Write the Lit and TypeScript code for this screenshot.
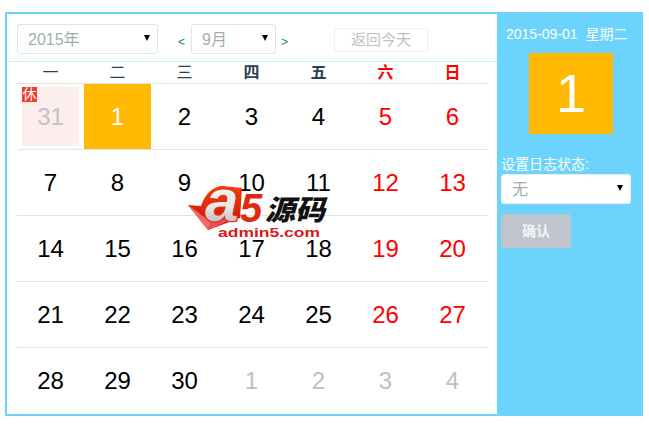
import { LitElement, html, css } from "lit";
import { customElement } from "lit/decorators.js";

interface Day { n: number; tone?: string; }
const weeks: Day[][] = [];
const seq: Day[] = [{ n: 31, tone: "muted" }];
for (let i = 1; i <= 30; i++) seq.push({ n: i });
for (let i = 1; i <= 4; i++) seq.push({ n: i, tone: "muted" });
for (let i = 0; i < 35; i += 7) {
  weeks.push(seq.slice(i, i + 7).map((d, j) => (j >= 5 && !d.tone ? { ...d, tone: "red" } : d)));
}

@customElement("app-root")
export class AppRoot extends LitElement {
  static styles = css`
    :host { display: block; width: 649px; height: 426px; overflow: hidden; background: #fff; font-family: "Liberation Sans", "Noto Sans CJK SC", sans-serif; position: relative; }
    .page { padding: 12px 6px 0 5px; }
    .box { display: flex; height: 404px; width: 638px; box-sizing: border-box; border: solid #6cd3fd; border-width: 2px 0 2px 2px; }
    .main { width: 490px; flex: none; display: flex; flex-direction: column; }
    .toolbar { height: 49px; box-sizing: border-box; border-bottom: 1px solid #c8f4f8; padding: 10px 0 0 10px; display: flex; align-items: flex-start; }
    .sel { position: relative; box-sizing: border-box; height: 30px; border: 1px solid #dde4ec; border-radius: 3px; background: #fff; color: #a3adad; font-size: 16px; line-height: 30px; padding-left: 10px; }
    .sel::after { content: ""; position: absolute; right: 7px; top: 10px; border: solid transparent; border-width: 6px 3.5px 0; border-top-color: #000; }
    .year { width: 141px; }
    .month { width: 85px; }
    .arrow { font-size: 12px; color: #0f8a78; line-height: 16px; margin-top: 10px; width: 8px; }
    .prev { margin-left: 20px; margin-right: 5px; }
    .next { margin-left: 5px; }
    .today { margin: 4px 0 0 45px; width: 94px; height: 24px; box-sizing: border-box; border: 1px solid #f0f0f0; color: #c0c0c0; font-size: 15px; line-height: 22px; text-align: center; }
    .grid { margin-left: 10px; width: 470px; }
    .head { display: grid; grid-template-columns: repeat(7, 67px); height: 22px; border-bottom: 1px solid #e3e3e3; box-sizing: border-box; font-size: 16px; line-height: 21px; text-align: center; color: #2c3e50; }
    .head .we { color: #f00; font-weight: 700; }
    .head .b { font-weight: 700; }
    .row { display: grid; grid-template-columns: repeat(7, 67px); height: 66px; box-sizing: border-box; border-bottom: 1px solid #e3e3e3; }
    .row:last-child { border-bottom: 0; }
    .cell { display: flex; align-items: center; justify-content: center; font-size: 24px; color: #000; position: relative; }
    .cell.red { color: #f00; }
    .cell.muted { color: #c0c0c0; }
    .cell.sel-day { background: #ffb900; color: #fff; }
    .cell.rest { background: #fdeeee; margin: 3px 5px 3px 5px; color: #c4c0c6; }
    .badge { position: absolute; left: 0; top: 0; width: 15px; height: 15px; background: #f43a2d; color: #fff; font-size: 14px; line-height: 15px; text-align: center; }
    .side { flex: 1; min-width: 0; background: #6cd3fd; margin: -2px 0; padding: 0 0 0 4px; color: #fff; }
    .date { margin: 13px 0 0 5px; height: 18px; line-height: 18px; font-size: 14px; white-space: pre; }
    .big { width: 84px; height: 81px; margin: 10px 0 0 28px; background: #ffb900; font-size: 54px; line-height: 81px; text-align: center; }
    .label { margin-top: 21px; font-size: 14px; line-height: 18px; }
    .status { width: 130px; margin-top: 1px; border-color: #e5eef3; }
    .ok { margin-top: 10px; width: 70px; height: 34px; background: #c0c4cc; border-radius: 3px; font-size: 14px; font-weight: 700; line-height: 34px; text-align: center; color: #f4f4f4; }
    .logo { position: absolute; left: 181px; top: 170px; width: 150px; height: 70px; }
  `;

  render() {
    const heads = ["一", "二", "三", "四", "五", "六", "日"];
    return html`
      <div class="page">
        <div class="box">
          <div class="main">
            <div class="toolbar">
              <div class="sel year">2015年</div>
              <div class="arrow prev">&lt;</div>
              <div class="sel month">9月</div>
              <div class="arrow next">&gt;</div>
              <div class="today">返回今天</div>
            </div>
            <div class="grid">
              <div class="head">
                ${heads.map((h, i) => html`<div class="${i >= 5 ? "we" : i >= 3 ? "b" : ""}">${h}</div>`)}
              </div>
              ${weeks.map((w, r) => html`
                <div class="row">
                  ${w.map((d, c) => {
                    if (r === 0 && c === 0) return html`<div class="cell rest"><span class="badge">休</span>${d.n}</div>`;
                    if (r === 0 && c === 1) return html`<div class="cell sel-day">${d.n}</div>`;
                    return html`<div class="cell ${d.tone ?? ""}">${d.n}</div>`;
                  })}
                </div>`)}
            </div>
          </div>
          <div class="side">
            <div class="date">2015-09-01  星期二</div>
            <div class="big">1</div>
            <div class="label">设置日志状态:</div>
            <div class="sel status">无</div>
            <div class="ok">确认</div>
          </div>
        </div>
      </div>
      <svg class="logo" viewBox="0 0 150 70">
        <defs>
          <linearGradient id="r" x1="0" y1="0" x2="0" y2="1"><stop offset="0" stop-color="#f4400c"/><stop offset="1" stop-color="#c40e10"/></linearGradient>
          <linearGradient id="g" x1="0" y1="0" x2="0" y2="1"><stop offset="0" stop-color="#fff"/><stop offset="0.6" stop-color="#e8e8e8"/><stop offset="1" stop-color="#a0a0a0"/></linearGradient>
        </defs>
        <path d="M7 35 L20 36 C24 24 32 16 42 16 L61 18 L59 48 L27 60 Z" fill="url(#r)"/>
        <path d="M7 35 L27 60 L30 52 Z" fill="#ee6a6a"/>
        <path d="M27 60 L30 52 L58 46 Z" fill="#e8505a"/>
        <text x="24" y="51" font-family="Liberation Sans" font-size="60" font-weight="700" font-style="italic" fill="url(#g)" stroke="#e8300c" stroke-width="2.5" paint-order="stroke">a</text>
        <text x="59" y="52" font-family="Liberation Sans" font-size="40" font-weight="700" font-style="italic" fill="#e02a10">5</text>
        <text x="84" y="50" font-family="Noto Sans CJK SC" font-size="28" font-weight="900" font-style="italic" fill="#111" textLength="60" lengthAdjust="spacingAndGlyphs">源码</text>
        <text x="37" y="67" font-family="Liberation Sans" font-size="12" font-weight="700" fill="#d81820" textLength="102" lengthAdjust="spacingAndGlyphs">admin5.com</text>
      </svg>
    `;
  }
}
